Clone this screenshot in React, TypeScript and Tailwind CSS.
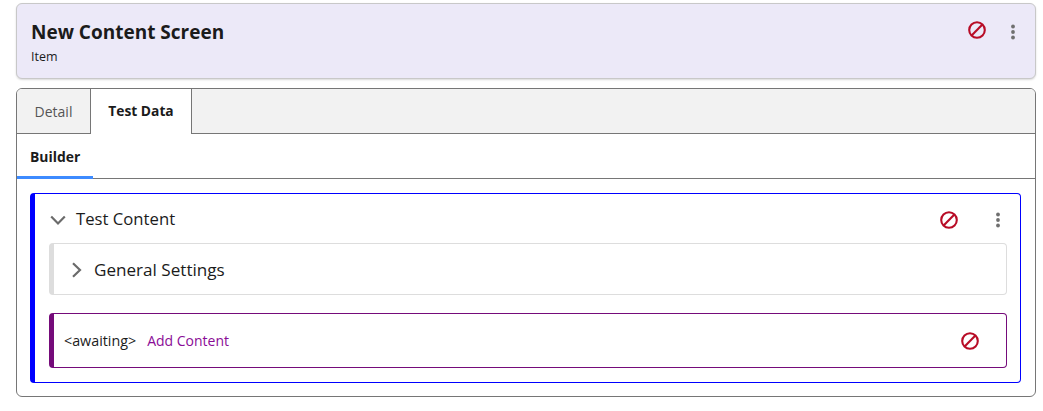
function BanIcon({ className }: { className?: string }) {
  return (
    <svg width="18" height="18" viewBox="0 0 18 18" fill="none" className={className}>
      <circle cx="9" cy="9" r="7.8" stroke="#b80c26" strokeWidth="2.1" />
      <path d="M14.4 3.6 L3.6 14.4" stroke="#b80c26" strokeWidth="2.1" />
    </svg>
  );
}

function DotsIcon() {
  return (
    <svg width="4" height="16" viewBox="0 0 4 16" fill="#6f6f6f">
      <circle cx="2" cy="2.5" r="1.9" />
      <circle cx="2" cy="8" r="1.9" />
      <circle cx="2" cy="13.5" r="1.9" />
    </svg>
  );
}

export default function App() {
  return (
    <div className="w-[1043px] h-[411px] bg-white pl-4 pr-2 pt-[3px] font-['Open_Sans',sans-serif] text-[#1b1b1b] overflow-hidden">
      {/* Item header */}
      <div className="w-[1020px] h-[76px] bg-[#ece9f8] border border-[#c8c8c8] rounded-md shadow-[0_1px_2px_rgba(0,0,0,0.15)] flex justify-between pl-[14px] pr-[20px]">
        <div className="pt-[14px]">
          <div className="text-[19px] leading-[28px] font-bold">New Content Screen</div>
          <div className="text-[12.5px] leading-[16px] mt-[3px]">Item</div>
        </div>
        <div className="flex items-start gap-[25px] pt-[17px]">
          <BanIcon />
          <div className="pt-[3px]"><DotsIcon /></div>
        </div>
      </div>

      {/* Tabbed panel */}
      <div className="w-[1020px] h-[309px] mt-[9px] border border-[#767676] rounded-md overflow-hidden">
        <div className="h-[45px] bg-[#f2f2f2] border-b border-[#767676] flex">
          <div className="w-[74px] h-[45px] border-r border-[#767676] flex items-center justify-center text-[14px] text-[#555555]">
            Detail
          </div>
          <div className="w-[101px] h-[45px] bg-white border-r border-[#767676] flex items-center justify-center text-[13.8px] font-bold">
            Test Data
          </div>
        </div>
        <div className="h-[45px] border-b border-[#767676]">
          <div className="w-[76px] h-[45px] border-b-[3px] border-[#3d8bff] flex items-center text-[13.9px] font-bold pl-[13px] pt-[4px]">
            Builder
          </div>
        </div>

        {/* Builder content */}
        <div className="pt-[14px] pl-[13px] pr-[14px]">
          <div className="h-[190px] border border-l-[5px] border-[#0000ff] rounded-[4px] pl-[14px] pr-[13px]">
            <div className="h-[49px] flex items-center">
              <svg width="16" height="11" viewBox="0 0 16 11" fill="none" className="ml-[1px] mt-[3px]">
                <path d="M1.2 1.5 L8 8.5 L14.8 1.5" stroke="#6b6b6b" strokeWidth="2.2" />
              </svg>
              <span className="text-[16.7px] ml-[10px]">Test Content</span>
              <BanIcon className="ml-auto mt-[2px]" />
              <div className="ml-[38px] mr-[7px] mt-[2px]"><DotsIcon /></div>
            </div>
            <div className="h-[52px] border border-l-[5px] border-[#dddddd] rounded-[4px] flex items-center pl-[17px]">
              <svg width="11" height="16" viewBox="0 0 11 16" fill="none" className="mt-[1px]">
                <path d="M2 1.2 L9 8 L2 14.8" stroke="#6b6b6b" strokeWidth="2.2" />
              </svg>
              <span className="text-[17.1px] ml-[12px] mt-[1px]">General Settings</span>
            </div>
            <div className="h-[55px] mt-[18px] border border-l-[5px] border-[#750b7a] rounded-[4px] flex items-center pl-[10px] pr-[27px]">
              <span className="text-[14.3px]">&lt;awaiting&gt;</span>
              <span className="text-[14px] text-[#8a0c96] ml-[11px]">Add Content</span>
              <BanIcon className="ml-auto mt-[1px]" />
            </div>
          </div>
        </div>
      </div>
    </div>
  );
}
